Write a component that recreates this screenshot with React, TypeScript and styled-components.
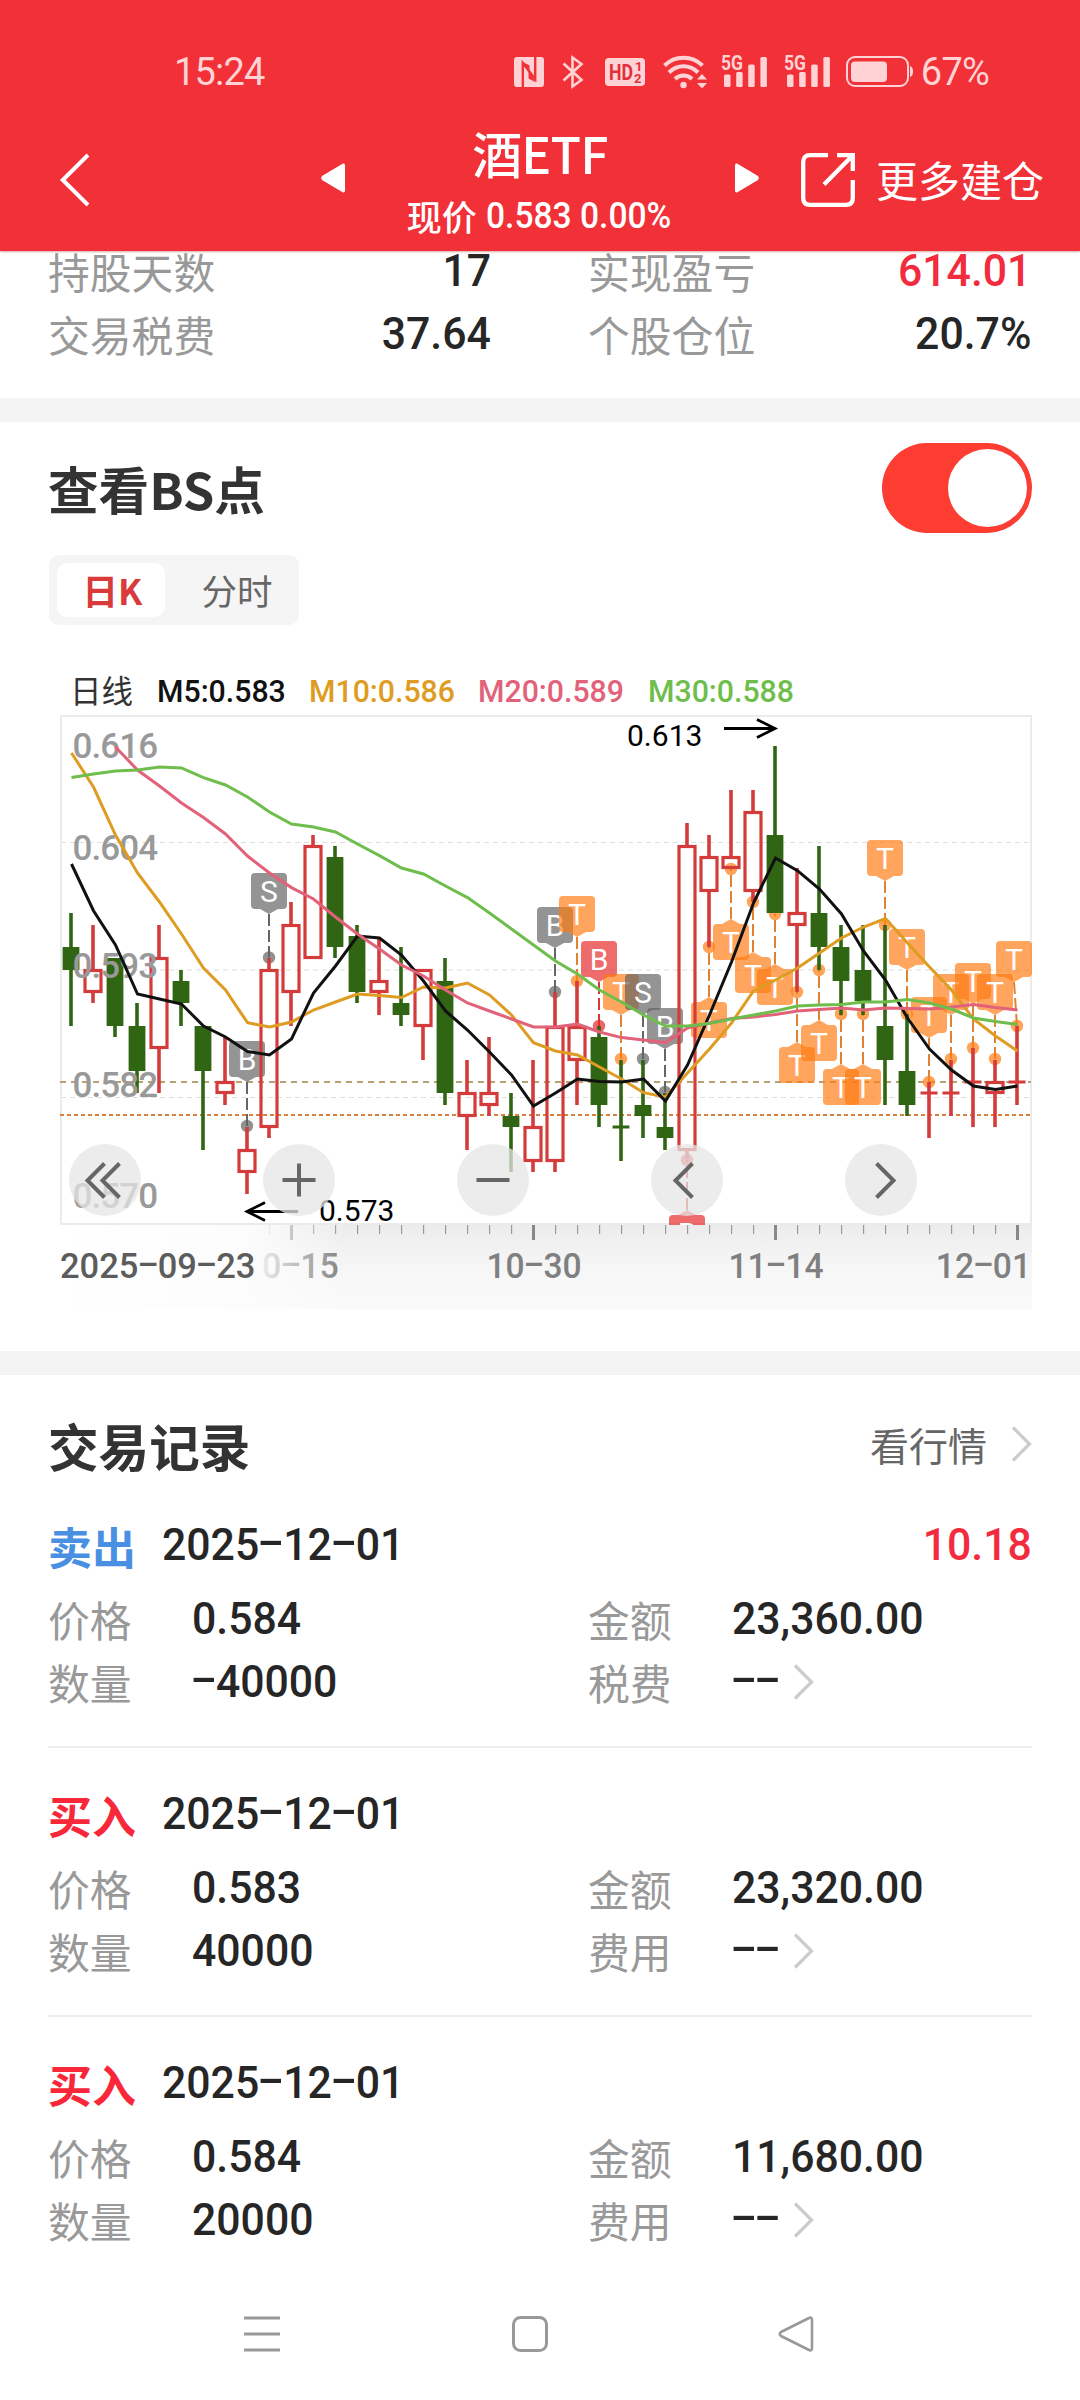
import React from 'react';
import styled, { createGlobalStyle } from 'styled-components';

const LATIN = 'Roboto, "Noto Sans CJK SC", sans-serif';
const HAN = '"Noto Sans CJK SC", Roboto, sans-serif';

const Global = createGlobalStyle`
  * { box-sizing: border-box; }
  body { margin: 0; background: #fff; }
  svg { display: block; flex: none; overflow: visible; }
`;

const Screen = styled.div`
  width: 1080px;
  height: 2400px;
  background: #fff;
  overflow: hidden;
  display: flex;
  flex-direction: column;
  font-family: ${HAN};
  white-space: nowrap;
`;

/* ---------- numbers ---------- */

const NumText = styled.span<{ $size: number; $color: string; $squeeze: number; $origin: string }>`
  display: inline-block;
  font-family: ${LATIN};
  font-size: ${(p) => p.$size}px;
  font-weight: 500;
  color: ${(p) => p.$color};
  transform: scaleX(${(p) => p.$squeeze});
  transform-origin: ${(p) => p.$origin} center;
`;

const Dash = styled.span`
  display: inline-block;
  width: 0.56em;
  text-align: center;
  transform: translateY(-0.09em) scaleX(1.85);
`;

type NumProps = { value: string; size?: number; color?: string; squeeze?: number; origin?: string };

function Num({ value, size = 45, color = '#262626', squeeze = 0.95, origin = 'left' }: NumProps) {
  return (
    <NumText $size={size} $color={color} $squeeze={squeeze} $origin={origin}>
      {value.split(/(-)/).map((part, i) => (part === '-' ? <Dash key={i}>-</Dash> : part))}
    </NumText>
  );
}

/* ---------- header ---------- */

const Header = styled.header`
  position: relative;
  z-index: 1;
  flex: none;
  height: 251px;
  background: #f23037;
  color: #fff;
  box-shadow: 0 1px 2px rgba(150, 0, 0, 0.35);
`;

const StatusBar = styled.div`
  height: 100px;
  padding: 43px 91px 0 174px;
  display: flex;
  align-items: center;
  justify-content: space-between;
  color: #ffd3d5;
`;

const StatusIcons = styled.div`
  display: flex;
  align-items: center;
`;

const StatusText = styled.span`
  font-family: ${LATIN};
  font-size: 38px;
  letter-spacing: -0.8px;
`;

const Gap = styled.i<{ $w: number }>`
  flex: none;
  width: ${(p) => p.$w}px;
`;

const NavRow = styled.div`
  height: 151px;
  padding: 5px 0 0 60px;
  display: flex;
  align-items: center;
`;

const NavIcon = styled.div`
  padding-top: 3px;
`;

const TitleBlock = styled.div`
  width: 390px;
  margin-top: 8px;
  display: flex;
  flex-direction: column;
  align-items: center;
`;

const Title = styled.div`
  font-size: 50px;
  font-weight: 500;
  line-height: 62px;
  letter-spacing: -0.8px;
`;

const Subtitle = styled.div`
  display: flex;
  align-items: center;
  gap: 9px;
  margin: 5px -14px 0 0;
  font-size: 35px;
  font-weight: 500;
  line-height: 56px;
`;

const MoreText = styled.span`
  font-size: 42px;
  padding-top: 1px;
`;

/* ---------- summary ---------- */

const Summary = styled.section`
  flex: none;
  height: 147px;
  padding: 0 49px 0 48px;
`;

const SummaryGrid = styled.div`
  margin-top: -12px;
  display: grid;
  grid-template-columns: 443px 443px;
  grid-auto-rows: 63px;
  column-gap: 97px;
`;

const SummaryItem = styled.div`
  display: flex;
  align-items: center;
  justify-content: space-between;
`;

const Label = styled.span`
  font-size: 41.8px;
  line-height: 56px;
  color: #999;
`;

const Separator = styled.div`
  flex: none;
  height: 24px;
  background: #f4f4f4;
`;

/* ---------- chart section ---------- */

const ChartSection = styled.section`
  flex: none;
  height: 929px;
  padding: 21px 48px 0;
`;

const ToggleRow = styled.div`
  height: 90px;
  display: flex;
  align-items: center;
  justify-content: space-between;
`;

const SectionTitle = styled.h2`
  margin: 0;
  font-size: 50.6px;
  font-weight: 700;
  color: #333;
`;

const Toggle = styled.div`
  width: 150px;
  height: 90px;
  padding: 6px 5px;
  border-radius: 45px;
  background: #fd3c32;
  display: flex;
  justify-content: flex-end;
`;

const Knob = styled.div`
  width: 79px;
  height: 78px;
  border-radius: 50%;
  background: #fff;
`;

const Tabs = styled.div`
  width: 250px;
  height: 70px;
  margin: 22px 0 0 1px;
  padding: 8px;
  border-radius: 10px;
  background: #f5f5f5;
  display: flex;
`;

const Tab = styled.div<{ $active?: boolean }>`
  flex: none;
  width: ${(p) => (p.$active ? 108 : 126)}px;
  padding-left: ${(p) => (p.$active ? 3 : 18)}px;
  height: 54px;
  line-height: 54px;
  text-align: center;
  font-size: 35.5px;
  border-radius: 10px;
  font-weight: ${(p) => (p.$active ? 700 : 400)};
  color: ${(p) => (p.$active ? '#d93a3a' : '#666')};
  background: ${(p) => (p.$active ? '#fff' : 'transparent')};
`;

const Legend = styled.div`
  height: 50px;
  margin-top: 40px;
  padding: 2px 0 0 22px;
  display: grid;
  grid-template-columns: 87px 152px 169px 170px auto;
  align-items: center;
  font-size: 31.5px;
  line-height: 44px;
  color: #333;
`;

const LegendTitle = styled.span`
  margin-top: -4px;
`;

const ChartArea = styled.div`
  position: relative;
  height: 510px;
  overflow: hidden;
`;

const Controls = styled.div`
  position: absolute;
  left: 21px;
  top: 429px;
  display: flex;
  gap: 122px;
`;

const RoundButton = styled.div`
  width: 72px;
  height: 72px;
  border-radius: 50%;
  background: rgba(229, 229, 229, 0.75);
`;

const Axis = styled.div`
  position: relative;
  height: 84px;
  margin-left: 12px;
  background: linear-gradient(#ececec, #f7f7f7 55%, #fafafa);
`;

const AxisFade = styled.div`
  position: absolute;
  inset: 0 auto 0 0;
  width: 285px;
  background: linear-gradient(90deg, #fff 0, #fcfcfc 66%, rgba(252, 252, 252, 0) 100%);
`;

const AxisLabel = styled.div<{ $x: number; $align?: string }>`
  position: absolute;
  top: 21px;
  left: ${(p) => p.$x}px;
  line-height: 42px;
  transform: translateX(${(p) => p.$align ?? '-50%'});
`;

/* ---------- records ---------- */

const Records = styled.section`
  flex: none;
  padding: 0 48px;
`;

const RecordsHeader = styled.div`
  height: 104px;
  padding-top: 35px;
  display: flex;
  align-items: center;
  justify-content: space-between;
`;

const QuoteLink = styled.div`
  display: flex;
  align-items: center;
  gap: 24px;
  margin-top: -2px;
  font-size: 39px;
  color: #666;
`;

const Record = styled.article`
  height: 269px;
  padding-top: 33px;
  border-bottom: 2px solid #ededed;
  &:last-child { border-color: transparent; }
`;

const RecordHead = styled.div`
  height: 64px;
  display: flex;
  align-items: center;
  & > :last-child { margin-left: auto; }
`;

const Side = styled.span<{ $buy: boolean }>`
  width: 114px;
  padding-top: 3px;
  font-size: 44px;
  font-weight: 700;
  color: ${(p) => (p.$buy ? '#f8283a' : '#4a90e2')};
`;

const Fields = styled.div`
  margin-top: 11px;
  display: grid;
  grid-template-columns: 540px 444px;
  grid-auto-rows: 63px;
`;

const Field = styled.div`
  display: grid;
  grid-template-columns: 144px auto 1fr;
  align-items: center;
`;

const ChevronSlot = styled.div`
  padding-left: 11px;
`;

const SystemNav = styled.nav`
  flex: none;
  height: 114px;
  padding: 0 0 18px 244px;
  display: flex;
  align-items: center;
`;

/* ---------- chart data ---------- */

const X = (i: number) => 71 + 22 * i;

// [direction, high, body top, body bottom, low] in canvas coordinates
const candles: [string, number, number, number, number][] = [
  ['g', 913, 947, 970, 1026], ['r', 925, 969, 993, 1003], ['g', 958, 958, 1026, 1037],
  ['g', 1003, 1026, 1071, 1093], ['r', 925, 957, 1049, 1093], ['g', 970, 981, 1003, 1026],
  ['g', 1026, 1026, 1071, 1150], ['r', 1037, 1081, 1094, 1105], ['r', 1127, 1149, 1173, 1194],
  ['r', 958, 969, 1128, 1138], ['r', 902, 924, 993, 1026], ['r', 835, 845, 959, 959],
  ['g', 846, 857, 947, 958], ['g', 925, 936, 992, 1003], ['r', 937, 980, 993, 1015],
  ['g', 947, 1003, 1015, 1026], ['r', 969, 969, 1027, 1060], ['g', 958, 981, 1093, 1105],
  ['r', 1060, 1092, 1117, 1150], ['r', 1037, 1092, 1106, 1116], ['g', 1093, 1116, 1127, 1172],
  ['r', 1060, 1126, 1162, 1172], ['r', 992, 1026, 1162, 1172], ['r', 981, 1026, 1061, 1105],
  ['g', 1026, 1037, 1105, 1127], ['g', 1060, 1125.5, 1128.5, 1161], ['g', 1060, 1105, 1116, 1138],
  ['g', 1093, 1127, 1138, 1150], ['r', 823, 845, 1151, 1159], ['r', 835, 856, 892, 947],
  ['r', 790, 856, 869, 869], ['r', 790, 811, 892, 902], ['g', 746, 835, 913, 913],
  ['r', 868, 912, 926, 992], ['g', 846, 913, 947, 970], ['g', 925, 947, 981, 1015],
  ['g', 925, 970, 1001, 1015], ['g', 925, 1026, 1060, 1105], ['g', 1014, 1071, 1105, 1116],
  ['r', 1082, 1091.5, 1094.5, 1138], ['r', 1060, 1091.5, 1094.5, 1116], ['r', 1048, 1080.5, 1083.5, 1127],
  ['r', 1060, 1081, 1094, 1127], ['r', 1026, 1080.5, 1083.5, 1105],
];

// [candle index, letter, tone, box top, anchor y]
const markers: [number, string, string, number, number][] = [
  [8, 'B', 'grey', 1041, 1126], [9, 'S', 'grey', 873, 957.5], [22, 'B', 'grey', 907, 992],
  [23, 'T', 'orange', 896, 981], [24, 'B', 'red', 941, 1026], [25, 'T', 'orange', 974, 1059],
  [26, 'S', 'grey', 974, 1059], [27, 'B', 'grey', 1008, 1092], [28, 'B', 'red', 1215, 1160],
  [29, 'T', 'orange', 1002, 947], [30, 'T', 'orange', 924, 869], [31, 'T', 'orange', 957, 902],
  [32, 'T', 'orange', 969, 914], [33, 'T', 'orange', 1047, 992], [34, 'T', 'orange', 1025, 970],
  [35, 'T', 'orange', 1069, 1014], [36, 'T', 'orange', 1069, 1014], [37, 'T', 'orange', 840, 925],
  [38, 'T', 'orange', 929, 1014], [39, 'T', 'orange', 997, 1082], [40, 'T', 'orange', 974, 1059],
  [41, 'T', 'orange', 963, 1048], [42, 'T', 'orange', 974, 1059], [43, 'T', 'orange', 941, 1026],
];

const tones: Record<string, [string, string]> = {
  grey: ['rgb(98,98,98)', '#666'],
  orange: ['rgb(255,124,18)', '#e0822f'],
  red: ['rgb(230,39,39)', '#d43a3a'],
};

const averages: { color: string; from: number; ys: number[] }[] = [
  {
    color: '#de9c22', from: 0,
    ys: [753, 787, 835, 873, 902, 934, 968, 990, 1022.7, 1027, 1022, 1010, 1002, 994, 995.5, 997.5, 987, 988, 983, 995, 1015, 1042.7, 1051, 1055, 1067, 1079, 1092.7, 1097, 1073, 1049, 1023, 991, 980, 968, 953, 938, 927, 918.5, 943, 967, 990, 1019, 1036, 1051],
  },
  {
    color: '#111', from: 0,
    ys: [864, 910.7, 945, 994, 999, 1004, 1026, 1037, 1051.5, 1055, 1039, 993, 966, 936, 938, 955, 981, 1011, 1030, 1052, 1075, 1106, 1093, 1079, 1081.5, 1082, 1079, 1101, 1065, 1015, 962, 903, 858, 870.7, 889, 914, 951, 980, 1018, 1049, 1070, 1086, 1089.5, 1086],
  },
  {
    color: '#e2627a', from: 2,
    ys: [747, 770, 786, 803, 817.5, 834, 856, 873, 887.6, 899, 917, 934, 949, 965, 976, 990, 1003, 1011, 1019, 1027, 1027, 1024, 1032, 1037.6, 1040, 1042.6, 1028, 1023, 1018.5, 1017, 1014.5, 1011, 1009.5, 1008, 1010, 1008, 1008.5, 1009, 1007, 1004.5, 1007.5, 1010],
  },
  {
    color: '#6fbd4c', from: 0,
    ys: [777.6, 774, 771, 770, 767, 768, 777.6, 785, 797, 812, 824, 827, 832, 844, 855.6, 868, 874, 886, 897.6, 913, 929, 945, 961, 974, 990, 1002, 1015, 1026, 1026, 1023.5, 1019, 1015, 1011, 1006, 1005, 1004.5, 1002, 1002, 999.5, 1003, 1009, 1018, 1021.5, 1024.5],
  },
];

const priceLabels: [string, number][] = [
  ['0.616', 758], ['0.604', 860], ['0.593', 978], ['0.582', 1097], ['0.570', 1207.5],
];

function Marker({ i, letter, tone, top, anchor }: { i: number; letter: string; tone: string; top: number; anchor: number }) {
  const [fill, line] = tones[tone];
  const x = X(i);
  const cx = Math.min(x, 1014);
  const above = anchor > top;
  const edge = above ? top + 36 : top;
  const tip = above ? edge + 5 : edge - 5;
  return (
    <g>
      <path d={`M${cx} ${tip}L${x} ${anchor}`} stroke={line} strokeWidth="2" strokeDasharray="12 4" />
      <circle cx={x} cy={anchor} r="6.200" fill={fill} opacity=".7" />
      <g fill={fill} opacity=".68">
        <rect x={cx - 18} y={top} width="36" height="36" rx="4" />
        <path d={`M${cx - 9} ${edge}H${cx + 9}L${cx} ${tip}Z`} />
      </g>
      <text x={cx} y={top + 29} textAnchor="middle" fontSize="30" fill="#fff">{letter}</text>
    </g>
  );
}

function Candle({ i }: { i: number }) {
  const [dir, high, top, bottom, low] = candles[i];
  const x = X(i);
  if (dir === 'g') {
    return (
      <g fill="#306613">
        <rect x={x - 1.8} y={high} width="3.6" height={low - high} />
        <rect x={x - 8.4} y={top} width="16.8" height={bottom - top} />
      </g>
    );
  }
  const doji = bottom - top < 4;
  return (
    <g fill="#d43b3b">
      {doji ? (
        <>
          <rect x={x - 1.8} y={high} width="3.6" height={low - high} />
          <rect x={x - 8.5} y={top} width="17" height="3" />
        </>
      ) : (
        <>
          <rect x={x - 1.8} y={high} width="3.6" height={top - high} />
          <rect x={x - 1.8} y={bottom} width="3.6" height={low - bottom} />
          <rect x={x - 8} y={top + 1.5} width="16" height={bottom - top - 3} fill="none" stroke="#d43b3b" strokeWidth="3.2" />
        </>
      )}
    </g>
  );
}

function KLineChart() {
  return (
    <svg width="984" height="510" viewBox="48 715 984 510" fontFamily="Roboto, sans-serif" fill="none">
      <g stroke="#dedede" strokeWidth="1.2" strokeDasharray="5 4">
        <path d="M61 842.5H1031" />
        <path d="M61 970H1031" />
        <path d="M61 1097.5H1031" />
      </g>
      <rect x="61" y="716" width="970" height="508" stroke="#ebebeb" strokeWidth="2" />
      <path d="M60 1082H1031" stroke="#b8a273" strokeWidth="1.8" strokeDasharray="6 5" />
      <path d="M60 1115H1031" stroke="#d9813f" strokeWidth="2" strokeDasharray="4 3" />
      {markers.map(([i, letter, tone, top, anchor]) => (
        <Marker key={i} i={i} letter={letter} tone={tone} top={top} anchor={anchor} />
      ))}
      {candles.map((_, i) => <Candle key={i} i={i} />)}
      <g fontSize="35" fontWeight="500" fill="#999" letterSpacing="-.9">
        {priceLabels.map(([t, y]) => <text key={t} x="72.5" y={y}>{t}</text>)}
      </g>
      {averages.map((m) => (
        <polyline
          key={m.color}
          points={m.ys.map((y, k) => `${X(k + m.from) + 0.5},${y}`).join(' ')}
          stroke={m.color}
          strokeWidth="3"
        />
      ))}
      <g stroke="#000" strokeWidth="2.8">
        <path d="M724 728.5H775M757 719.5L775 728.5L757 737.5" />
        <path d="M298 1211.5H247M265 1202.5L247 1211.5L265 1220.5" />
      </g>
      <g fontSize="30" fill="#000">
        <text x="627" y="746">0.613</text>
        <text x="319" y="1221">0.573</text>
      </g>
    </svg>
  );
}

const controlPaths = [
  'M35.500 19.500L18.500 36.500L35.500 53.500M50.500 19.500L33.500 36.500L50.500 53.500',
  'M36 19.500V52.500M19.500 36H52.500',
  'M19.500 36H52.500',
  'M41.500 19.500L24.500 36.500L41.500 53.500',
  'M31.500 19.500L48.500 36.500L31.500 53.500',
];

function TimeAxis() {
  const ticks = Array.from({ length: 35 }, (_, k) => k + 9);
  return (
    <Axis>
      <svg width="972" height="20" viewBox="60 0 972 20">
        {ticks.map((i) =>
          (i - 10) % 11 === 0 ? (
            <rect key={i} x={X(i) - 1} y="0" width="3" height="15" fill="#888" />
          ) : (
            <rect key={i} x={X(i)} y="0" width="1.2" height="9" fill="#999" />
          ),
        )}
      </svg>
      <AxisLabel $x={202} $align="0"><Num value="0-15" size={35} color="#808080" squeeze={0.97} /></AxisLabel>
      <AxisFade />
      <AxisLabel $x={0} $align="0"><Num value="2025-09-23" size={35} color="#5c5c5c" squeeze={0.985} /></AxisLabel>
      <AxisLabel $x={474}><Num value="10-30" size={35} color="#808080" squeeze={0.96} origin="center" /></AxisLabel>
      <AxisLabel $x={716}><Num value="11-14" size={35} color="#808080" squeeze={0.96} origin="center" /></AxisLabel>
      <AxisLabel $x={971} $align="-100%"><Num value="12-01" size={35} color="#808080" squeeze={0.96} origin="right" /></AxisLabel>
    </Axis>
  );
}

/* ---------- small icons ---------- */

const Chevron = () => (
  <svg width="21" height="36" viewBox="0 0 21 36" fill="none" stroke="#ccc" strokeWidth="3.200">
    <path d="M2 1.500L18.500 18L2 34.500" />
  </svg>
);

const Signal = () => (
  <svg width="47" height="33" viewBox="0 0 47 33" fill="currentColor">
    <text x="0" y="15" fontFamily="Roboto, sans-serif" fontWeight="700" fontSize="20" textLength="22" lengthAdjust="spacingAndGlyphs">5G</text>
    <rect x="3" y="19.500" width="6.500" height="12.500" rx="1.500" />
    <rect x="15.200" y="17" width="6.500" height="15" rx="1.500" />
    <rect x="27.200" y="9.500" width="6.500" height="22.500" rx="1.500" />
    <rect x="39.400" y="2" width="6.500" height="30" rx="1.500" />
  </svg>
);

function Status() {
  return (
    <StatusBar>
      <StatusText>15:24</StatusText>
      <StatusIcons>
        <svg width="30" height="30" viewBox="0 0 30 30">
          <rect width="30" height="30" rx="3" fill="currentColor" />
          <path d="M8.800 30V6L21.200 22V0" fill="none" stroke="#f23037" strokeWidth="2.400" />
          <path d="M8 4.500L15.500 8.500V16ZM22 25.500L14.500 21.500V14Z" fill="#f23037" />
        </svg>
        <Gap $w={18} />
        <svg width="22" height="34" viewBox="0 0 22 34" fill="none" stroke="currentColor" strokeWidth="2.600">
          <path d="M1.500 8.500L19.500 25L10.500 31.500V2.500L19.500 9L1.500 25.500" />
        </svg>
        <Gap $w={21} />
        <svg width="40" height="28" viewBox="0 0 40 28" fontFamily="Roboto, sans-serif" fontWeight="700">
          <rect width="40" height="28" rx="4" fill="currentColor" />
          <g fill="#e0303a">
            <text x="4" y="22" fontSize="22" textLength="24" lengthAdjust="spacingAndGlyphs">HD</text>
            <text x="30" y="13" fontSize="13">1</text>
            <text x="29" y="25" fontSize="13">2</text>
          </g>
        </svg>
        <Gap $w={18} />
        <svg width="44" height="34" viewBox="0 0 44 34" fill="none" stroke="currentColor" strokeWidth="4">
          <path d="M1.500 10.500A27 27 0 0 1 39.500 10.500" />
          <path d="M6 17.500A20 20 0 0 1 35 17.500" />
          <path d="M12 24A12 12 0 0 1 29 24" />
          <circle cx="20.500" cy="30" r="3.200" fill="currentColor" stroke="none" />
          <path d="M34 24.500L39 19L44 24.500ZM34 28L39 33.500L44 28Z" fill="currentColor" stroke="none" />
        </svg>
        <Gap $w={14} />
        <Signal />
        <Gap $w={16} />
        <Signal />
        <Gap $w={15} />
        <svg width="67" height="31" viewBox="0 0 67 31">
          <rect x="1" y="1" width="61" height="29" rx="8" fill="none" stroke="currentColor" strokeWidth="2" />
          <rect x="5" y="5.500" width="36" height="20.500" rx="4" fill="currentColor" />
          <path d="M64 10Q67 11 67 15.500T64 21Z" fill="currentColor" />
        </svg>
        <Gap $w={8} />
        <StatusText>67%</StatusText>
      </StatusIcons>
    </StatusBar>
  );
}

/* ---------- content ---------- */

const summary = [
  { label: '持股天数', value: '17' },
  { label: '实现盈亏', value: '614.01', color: '#f22b3e' },
  { label: '交易税费', value: '37.64' },
  { label: '个股仓位', value: '20.7%' },
];

const records = [
  { buy: false, profit: '10.18', price: '0.584', amount: '23,360.00', qty: '-40000', fee: '税费' },
  { buy: true, profit: '', price: '0.583', amount: '23,320.00', qty: '40000', fee: '费用' },
  { buy: true, profit: '', price: '0.584', amount: '11,680.00', qty: '20000', fee: '费用' },
];

const legend = [
  ['M5:0.583', '#111'], ['M10:0.586', '#de9c22'], ['M20:0.589', '#e2627a'], ['M30:0.588', '#6fbd4c'],
];

export default function App() {
  return (
    <Screen>
      <Global />
      <Header>
        <Status />
        <NavRow>
          <NavIcon>
            <svg width="30" height="54" viewBox="0 0 30 54" fill="none" stroke="#fff" strokeWidth="4">
              <path d="M28 2L2.800 27L28 52" />
            </svg>
          </NavIcon>
          <Gap $w={231} />
          <svg width="24" height="30" viewBox="0 0 24 30" fill="#fff">
            <path d="M22 .5Q24 0 24 2.500V27.500Q24 30 22 29.500L1 17Q-.8 15 1 13Z" />
          </svg>
          <TitleBlock>
            <Title>酒ETF</Title>
            <Subtitle>现价<Num value="0.583 0.00%" size={36.5} color="#fff" squeeze={0.92} /></Subtitle>
          </TitleBlock>
          <svg width="24" height="30" viewBox="0 0 24 30" fill="#fff">
            <path d="M2 .5Q0 0 0 2.500V27.500Q0 30 2 29.500L23 17Q24.800 15 23 13Z" />
          </svg>
          <Gap $w={42} />
          <NavIcon>
            <svg width="54" height="54" viewBox="0 0 54 54" fill="none" stroke="#fff" strokeWidth="4.300">
              <path d="M27 2.200H9Q2.200 2.200 2.200 9V45Q2.200 51.800 9 51.800H45Q51.800 51.800 51.800 45V27" />
              <path d="M36 2.200H51.800V18M51.800 2.200L23 31.500" />
            </svg>
          </NavIcon>
          <Gap $w={21} />
          <MoreText>更多建仓</MoreText>
        </NavRow>
      </Header>

      <Summary>
        <SummaryGrid>
          {summary.map((s) => (
            <SummaryItem key={s.label}>
              <Label>{s.label}</Label>
              <Num value={s.value} color={s.color} origin="right" />
            </SummaryItem>
          ))}
        </SummaryGrid>
      </Summary>
      <Separator />

      <ChartSection>
        <ToggleRow>
          <SectionTitle>查看BS点</SectionTitle>
          <Toggle><Knob /></Toggle>
        </ToggleRow>
        <Tabs>
          <Tab $active>日K</Tab>
          <Tab>分时</Tab>
        </Tabs>
        <Legend>
          <LegendTitle>日线</LegendTitle>
          {legend.map(([t, c]) => <Num key={t} value={t} size={32} color={c} squeeze={0.945} />)}
        </Legend>
        <ChartArea>
          <KLineChart />
          <Controls>
            {controlPaths.map((d) => (
              <RoundButton key={d}>
                <svg width="72" height="72" viewBox="0 0 72 72" fill="none" stroke="#666" strokeWidth="4">
                  <path d={d} />
                </svg>
              </RoundButton>
            ))}
          </Controls>
        </ChartArea>
        <TimeAxis />
      </ChartSection>
      <Separator />

      <Records>
        <RecordsHeader>
          <SectionTitle>交易记录</SectionTitle>
          <QuoteLink>看行情<Chevron /></QuoteLink>
        </RecordsHeader>
        {records.map((r, i) => (
          <Record key={i}>
            <RecordHead>
              <Side $buy={r.buy}>{r.buy ? '买入' : '卖出'}</Side>
              <Num value="2025-12-01" />
              <Num value={r.profit} color="#f22b3e" origin="right" />
            </RecordHead>
            <Fields>
              <Field><Label>价格</Label><Num value={r.price} /></Field>
              <Field><Label>金额</Label><Num value={r.amount} /></Field>
              <Field><Label>数量</Label><Num value={r.qty} /></Field>
              <Field><Label>{r.fee}</Label><Num value="--" /><ChevronSlot><Chevron /></ChevronSlot></Field>
            </Fields>
          </Record>
        ))}
      </Records>

      <SystemNav>
        <svg width="36" height="36" viewBox="0 0 36 36" stroke="#999" strokeWidth="3"><path d="M0 2H36M0 18H36M0 34H36" /></svg>
        <Gap $w={232} />
        <svg width="36" height="36" viewBox="0 0 36 36" fill="none" stroke="#999" strokeWidth="3"><rect x="1.500" y="1.500" width="33" height="33" rx="7" /></svg>
        <Gap $w={230} />
        <svg width="36" height="36" viewBox="0 0 36 36" fill="none" stroke="#999" strokeWidth="2.600" strokeLinejoin="round">
          <path d="M31 2Q34 .8 34 4V32Q34 35.200 31 34L3 20Q.5 18 3 16Z" />
        </svg>
      </SystemNav>
    </Screen>
  );
}
